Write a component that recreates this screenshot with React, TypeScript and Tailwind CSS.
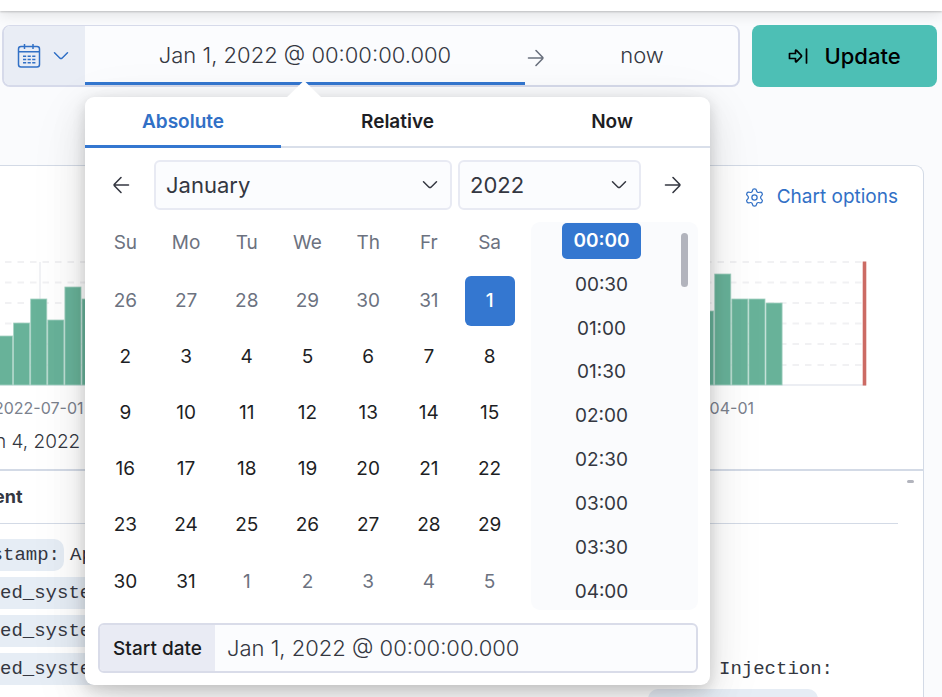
import React from "react";
import { Settings } from "lucide-react";

const PITCH = 17.1;
const BASE = 124;

// Bar heights of the histogram, oldest bucket first.
const BARS = [
  49, 62, 86, 65, 98, 86, 72, 60, 55, 68, 80, 74, 66, 59, 71, 83, 90, 78, 64, 58, 62,
  70, 76, 81, 69, 57, 63, 75, 88, 79, 67, 61, 73, 85, 77, 66, 59, 64, 72, 80, 69, 74,
  111, 86, 86, 82,
];

const GRID = [1, 21.5, 42, 62.5, 83, 104];

function Histogram() {
  return (
    <svg className="block" width="870" height="126" aria-hidden="true">
      <line x1="40" x2="40" y1="1" y2={BASE} stroke="#eceef2" strokeWidth="1.5" />
      {GRID.map((y) => (
        <line key={y} x1="5" x2="866" y1={y} y2={y} stroke="#f1f1f3" strokeWidth="2" strokeDasharray="6.5 6" />
      ))}
      <line x1="0" x2="866" y1={BASE} y2={BASE} stroke="#eceef3" strokeWidth="2" />
      {BARS.map((h, i) => (
        <rect key={i} x={-4 + i * PITCH + 0.5} y={BASE - h} width={PITCH - 1} height={h} fill="#68b299" stroke="#a5d1c2" strokeWidth="0.8" />
      ))}
      <rect x="862.7" y="0.5" width="3.6" height={BASE} fill="#cc6b64" />
    </svg>
  );
}

function Chevron({ className }: { className?: string }) {
  return (
    <svg className={className} width="16" height="10" viewBox="0 0 16 10" fill="none" stroke="currentColor" strokeWidth="1.5" strokeLinecap="round" aria-hidden="true">
      <path d="M1.5 1.8 L7 7.2 Q8 8 9 7.2 L14.5 1.8" />
    </svg>
  );
}

function Arrow({ className }: { className?: string }) {
  return (
    <svg className={className} width="18" height="18" viewBox="0 0 18 18" fill="none" stroke="currentColor" strokeWidth="1.6" strokeLinecap="round" aria-hidden="true">
      <path d="M1.5 9H16M9 1.5L15.6 8.2Q16.4 9 15.6 9.8L9 16.5" />
    </svg>
  );
}

function CalendarIcon() {
  return (
    <svg width="24" height="26" viewBox="0 0 24 26" fill="none" stroke="currentColor" strokeWidth="1.5" aria-hidden="true">
      <rect x="1.5" y="3.5" width="21" height="20.5" rx="2.5" />
      <path d="M1.5 8.8H22.5M7.5 1V6M16 1V6" />
      <path d="M6 13.2h3.2M10.6 13.2h3.2M15.2 13.2h3.2M6 16.5h3.2M10.6 16.5h3.2M15.2 16.5h3.2M6 19.7h3.2M10.6 19.7h3.2M15.2 19.7h3.2" />
    </svg>
  );
}

function UpdateIcon() {
  return (
    <svg width="20" height="18" viewBox="0 0 20 18" fill="none" stroke="currentColor" strokeWidth="1.7" strokeLinejoin="round" strokeLinecap="round" aria-hidden="true">
      <path d="M1.5 6.5H7.5V3.6Q7.7 2.6 8.5 3.3L13.3 8.3Q13.9 9 13.3 9.7L8.5 14.7Q7.7 15.4 7.5 14.4V11.5H1.5Z" />
      <path d="M18.5 2V16" />
    </svg>
  );
}

const WEEKDAYS = ["Su", "Mo", "Tu", "We", "Th", "Fr", "Sa"];
const WEEKS = [
  [26, 27, 28, 29, 30, 31, 1],
  [2, 3, 4, 5, 6, 7, 8],
  [9, 10, 11, 12, 13, 14, 15],
  [16, 17, 18, 19, 20, 21, 22],
  [23, 24, 25, 26, 27, 28, 29],
  [30, 31, 1, 2, 3, 4, 5],
];
const TIMES = ["00:00", "00:30", "01:00", "01:30", "02:00", "02:30", "03:00", "03:30", "04:00"];

function dayClass(week: number, day: number) {
  if (week === 0 && day === 1) return "bg-[#3477d0] font-medium text-white";
  if ((week === 0 && day > 20) || (week === 5 && day < 20)) return "text-[#6c7280]";
  return "text-[#1d1e24]";
}

function Calendar() {
  return (
    <table className="-ml-[3px] w-[425px] table-fixed text-center text-[19px]">
      <thead>
        <tr className="h-[51px] text-[#6c7280]">
          {WEEKDAYS.map((d) => (
            <th key={d} scope="col" className="p-0 pb-2 font-normal">{d}</th>
          ))}
        </tr>
      </thead>
      <tbody>
        {WEEKS.map((week, w) => (
          <tr key={w} className="h-14">
            {week.map((day) => (
              <td key={day} className="p-0">
                <button type="button" className={"mx-auto block size-[50px] rounded-md " + dayClass(w, day)}>
                  {day}
                </button>
              </td>
            ))}
          </tr>
        ))}
      </tbody>
    </table>
  );
}

function Popover() {
  return (
    <div role="dialog" aria-label="Start date picker" className="absolute top-[97px] left-[85px] z-10 w-[625px] rounded-[9px] bg-white shadow-[0_4px_14px_rgba(0,0,0,0.14),0_12px_36px_rgba(0,0,0,0.10),0_16px_64px_rgba(0,0,0,0.07)]">
      <svg className="absolute -top-4 left-[201px]" width="36" height="17" viewBox="0 0 36 17" aria-hidden="true">
        <path d="M0 17L16.5 1Q18 0 19.5 1L36 17Z" fill="#fff" />
      </svg>
      <div role="tablist" className="grid h-[51px] grid-cols-[196fr_233fr_196fr] border-b-2 border-[#d9dfea] text-[19px] font-semibold text-[#1d1e24]">
        <button type="button" role="tab" aria-selected="true" className="-mb-[2px] border-b-[3px] border-[#3477d0] pt-[2px] text-[#3170c6]">Absolute</button>
        <button type="button" role="tab" aria-selected="false" className="pt-[2px]">Relative</button>
        <button type="button" role="tab" aria-selected="false" className="pt-[2px]">Now</button>
      </div>

      <div className="py-3 pr-3 pl-[13px]">
        <div className="flex items-center text-[#343741]">
          <button type="button" aria-label="Previous month" className="flex h-[49px] w-14 items-center pl-[14px]">
            <Arrow className="rotate-180" />
          </button>
          <label className="relative mr-[6px] w-[298px]">
            <select aria-label="Month" defaultValue="January" className="block h-[50px] w-full appearance-none rounded-md border-2 border-[#e8eaf3] bg-[#fbfcfe] px-[10px] text-[22px] text-[#343741]">
              <option>January</option>
            </select>
            <Chevron className="pointer-events-none absolute top-5 right-[14px]" />
          </label>
          <label className="relative w-[183px]">
            <select aria-label="Year" defaultValue="2022" className="block h-[50px] w-full appearance-none rounded-md border-2 border-[#e8eaf3] bg-[#fbfcfe] px-[10px] text-[22px] text-[#343741]">
              <option>2022</option>
            </select>
            <Chevron className="pointer-events-none absolute top-5 right-[14px]" />
          </label>
          <button type="button" aria-label="Next month" className="flex h-[49px] flex-1 items-center justify-center pl-[6px]">
            <Arrow />
          </button>
        </div>

        <div className="mt-3 flex justify-between">
          <Calendar />
          <div className="flex h-[388px] w-[167px] justify-between rounded-[9px] bg-[#fafbfd] pt-px pr-[10px]">
            <ul className="flex w-[141px] flex-col items-center justify-between text-[19px] text-[#343741]">
              {TIMES.map((t, i) => (
                <li key={t}>
                  <button type="button" className={"block h-9 w-[79px] rounded-[5px] " + (i === 0 ? "bg-[#3477d0] font-semibold text-white" : "")}>
                    {t}
                  </button>
                </li>
              ))}
            </ul>
            <div className="mt-[10px] h-[54px] w-[7px] rounded-full bg-[#b2b4bd]" />
          </div>
        </div>

        <div className="mt-[13px] flex h-[50px] overflow-hidden rounded-md border-2 border-[#d9dce9] bg-[#fbfcfe]">
          <label htmlFor="start-date" className="flex w-[115px] items-center justify-center bg-[#e9ebf4] pt-[2px] text-[19px] font-medium text-[#1a1c21]">Start date</label>
          <input id="start-date" type="text" defaultValue="Jan 1, 2022 @ 00:00:00.000" className="min-w-0 flex-1 bg-transparent px-3 text-[22px] font-light text-[#343741] outline-none" />
        </div>
      </div>
    </div>
  );
}

function FieldRow({ name }: { name: string }) {
  return (
    <div className="flex h-8 w-[400px] items-center bg-[#e6edf5]">
      <span>{name}</span>
    </div>
  );
}

export default function App() {
  return (
    <div className="relative h-screen overflow-hidden bg-[#fafbfd] font-['Inter',sans-serif] text-[#343741]">
      <header className="h-[11px] bg-white shadow-[0_1px_2px_rgba(0,0,0,0.2),0_3px_14px_rgba(0,0,0,0.12)]" />

      <div className="mt-[14px] flex gap-3 pr-[5px] pl-[2px]">
        <div className="flex h-[62px] flex-1 overflow-hidden rounded-lg border-2 border-t border-[#d6daea] bg-[#fbfcfe]">
          <button type="button" aria-label="Date quick select" className="flex w-[81px] items-center gap-3 bg-[#e9edf5] pl-[13px] text-[#3170c6]">
            <CalendarIcon />
            <Chevron />
          </button>
          <button type="button" className="w-[440px] border-b-[3px] border-[#3477d0] pt-[2px] text-[22px] font-light">Jan 1, 2022 @ 00:00:00.000</button>
          <div className="flex w-[21px] items-center justify-center pt-1 text-[#69707d]">
            <Arrow />
          </div>
          <button type="button" className="flex-1 text-[22px] font-light">now</button>
        </div>
        <button type="button" className="flex h-[62px] w-[185px] items-center justify-center gap-4 rounded-lg bg-[#4dbfb5] text-[22px] font-medium text-black">
          <UpdateIcon />
          Update
        </button>
      </div>

      <Popover />

      <main className="mt-[78px] mr-[18px] h-[560px] overflow-hidden rounded-tr-[9px] border-t border-r border-[#d3dae6] bg-white">
        <div className="flex h-[62px] items-center justify-end pr-[25px]">
          <button type="button" className="flex items-center gap-3 text-[19px] text-[#3170c6]">
            <Settings size={21} strokeWidth={1.4} />
            Chart options
          </button>
        </div>
        <div className="mt-[33px]">
          <Histogram />
          <div className="mt-[9px] flex h-6 items-center justify-between pr-[169px] text-base text-[#7b818d]">
            <span className="-ml-[6px]">2022-07-01</span>
            <span>2023-04-01</span>
          </div>
          <p className="mt-[7px] -ml-[5px] h-[30px] text-[19px] leading-[30px] font-light">n 4, 2022</p>
        </div>
        <section className="mt-[12px] border-t-2 border-[#d3dae6]">
          <div className="mr-[25px] flex h-[53px] items-center border-b border-[#d3dae6]">
            <h2 className="-ml-[6px] text-lg font-bold">ent</h2>
            <span className="-mr-4 mb-8 ml-auto h-[3px] w-[7px] rounded-full bg-[#b2b4bd]" />
          </div>
          <div className="mt-[15px] flex flex-col gap-[6px] font-['Liberation_Mono',monospace] text-[19px]">
            <div className="flex h-8 items-center gap-[6px]">
              <span className="flex h-8 w-16 items-center justify-end rounded-r-[10px] bg-[#e6edf5] pr-1">stamp:</span>
              <span>Apr</span>
            </div>
            <FieldRow name="ed_system" />
            <FieldRow name="ed_system" />
            <div className="flex h-8 items-center">
              <span className="flex h-8 w-[400px] items-center bg-[#e6edf5]">ed_system</span>
              <span className="ml-[319px]">Injection:</span>
            </div>
            <div className="-mt-[2px] ml-[648px] h-8 w-[170px] rounded-[10px] bg-[#e6edf5]" />
          </div>
        </section>
      </main>
    </div>
  );
}
